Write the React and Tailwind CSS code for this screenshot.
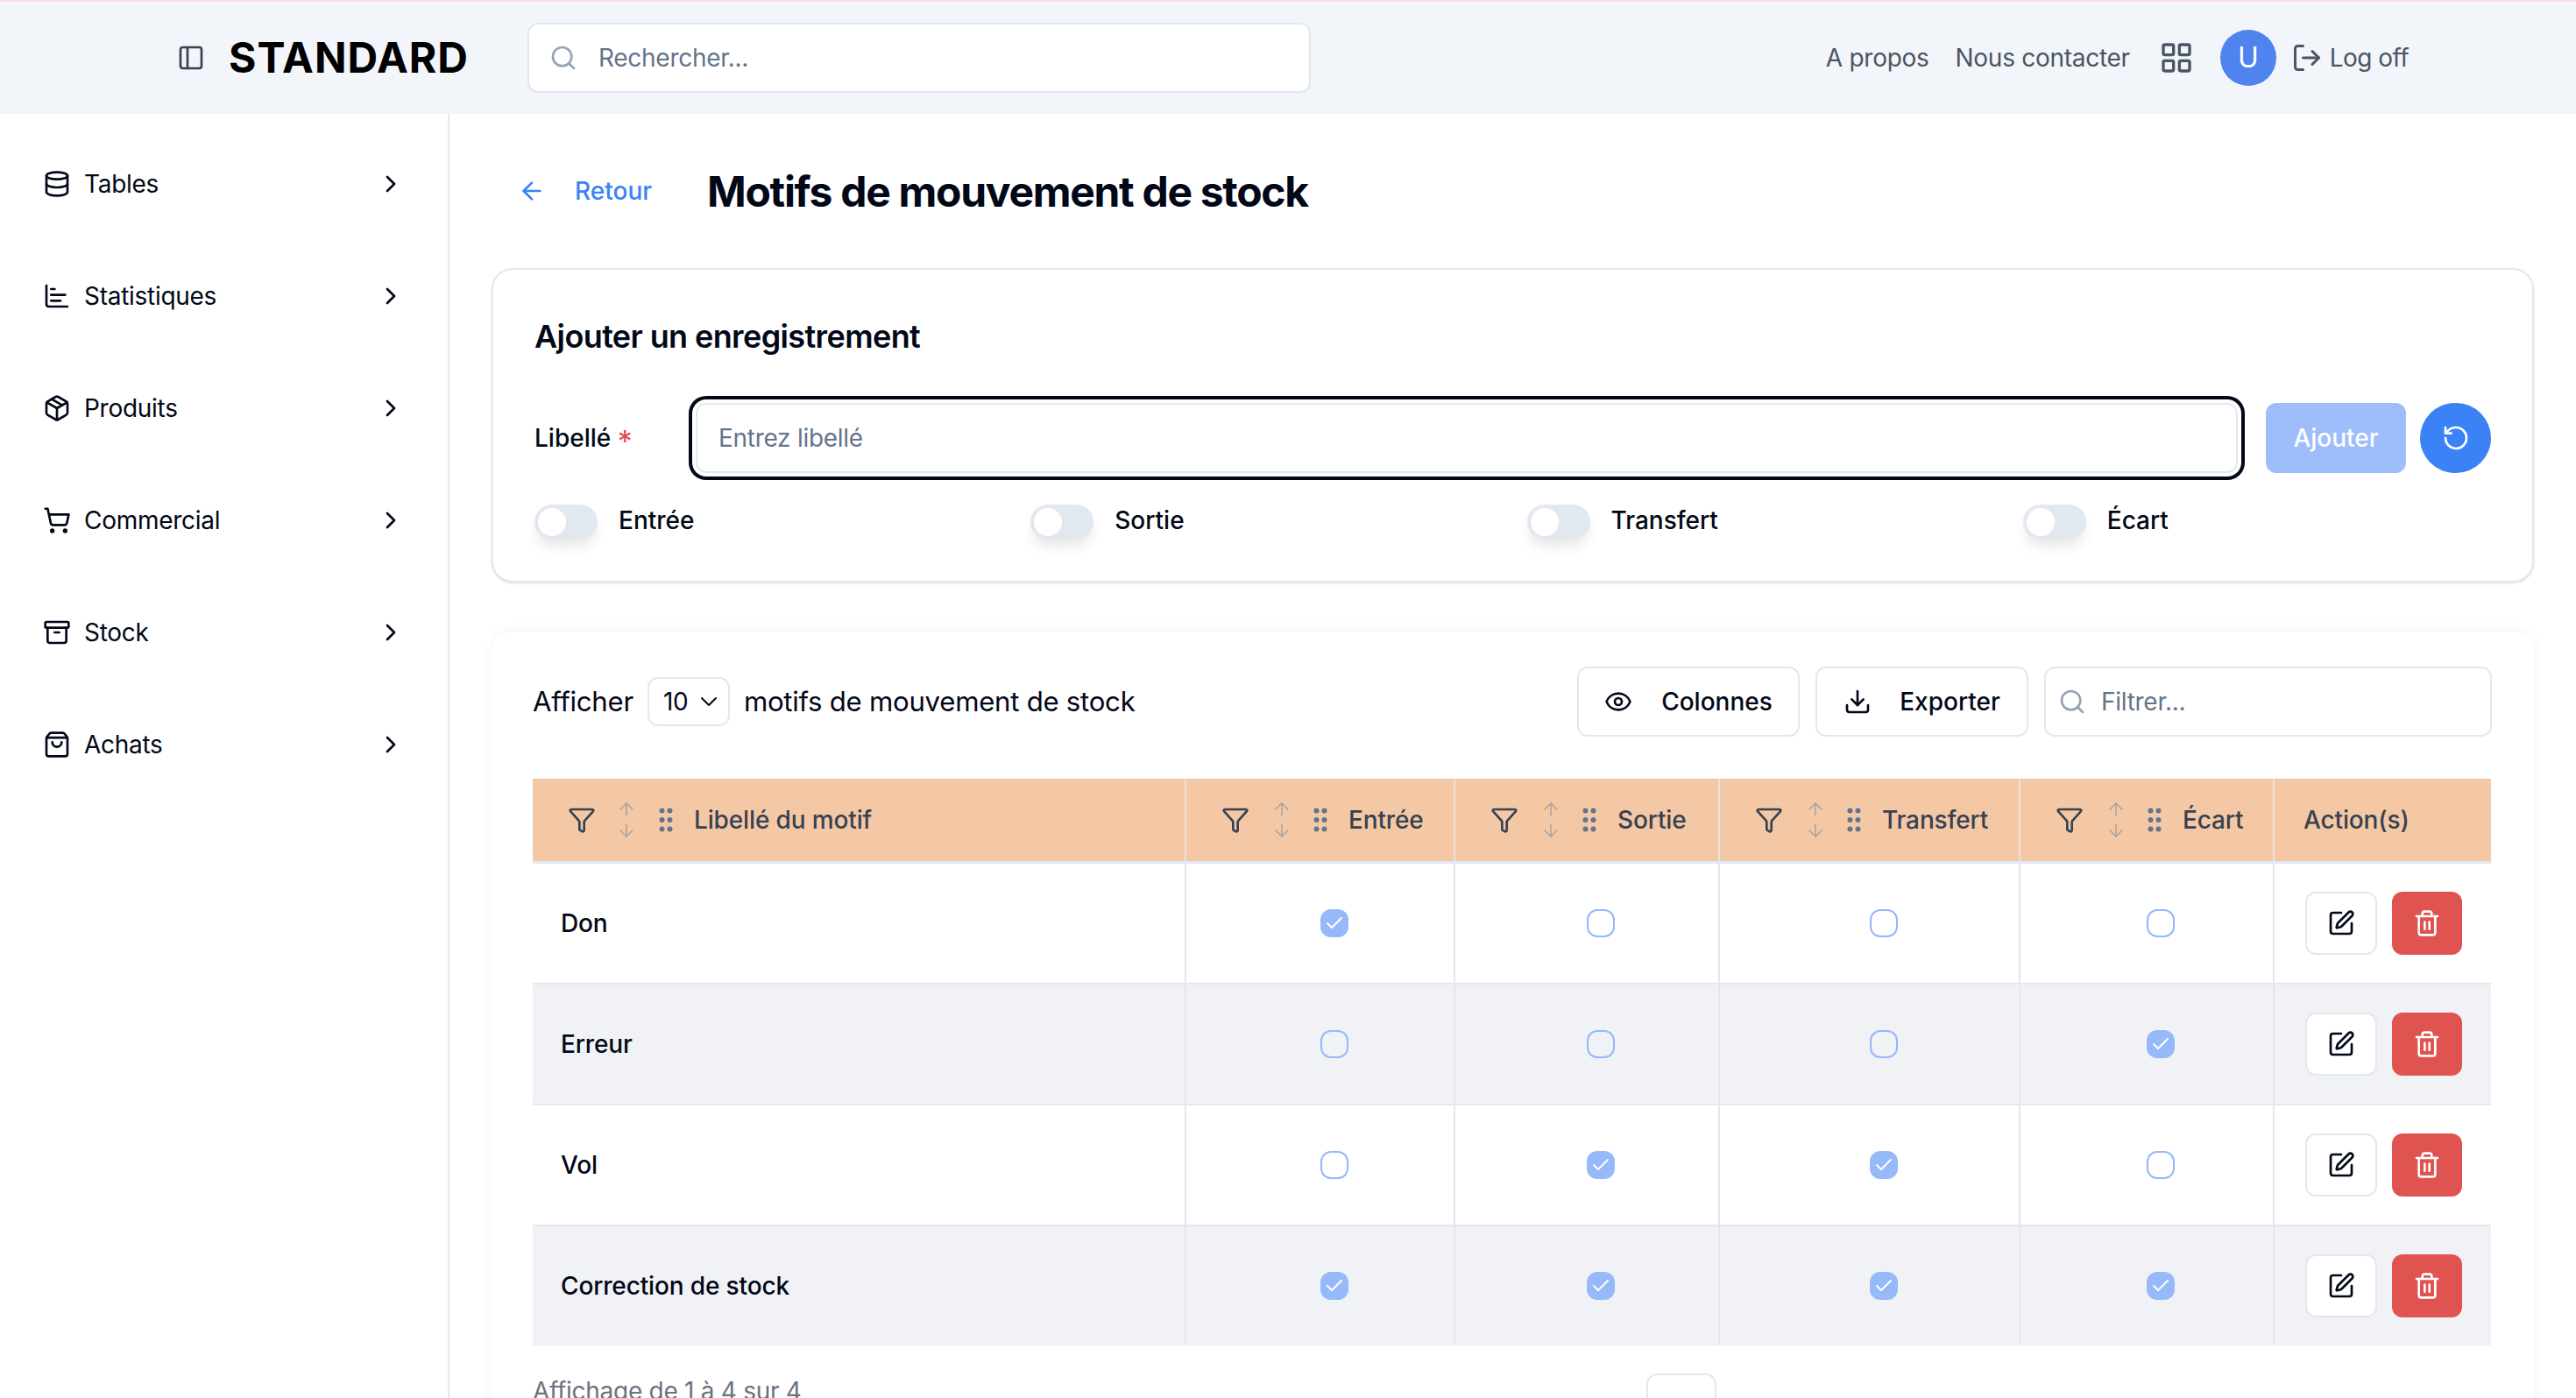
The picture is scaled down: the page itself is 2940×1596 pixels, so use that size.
import {
  PanelLeft, Search, LayoutGrid, LogOut, Database, ChartBar, Package, ShoppingCart, Archive, ShoppingBag,
  ChevronRight, ChevronDown, ArrowLeft, RotateCcw, Eye, Download, Funnel, ArrowUp, ArrowDown, GripVertical,
  SquarePen, Trash2, Check,
} from "lucide-react";

const menu = [
  { label: "Tables", icon: Database },
  { label: "Statistiques", icon: ChartBar },
  { label: "Produits", icon: Package },
  { label: "Commercial", icon: ShoppingCart },
  { label: "Stock", icon: Archive },
  { label: "Achats", icon: ShoppingBag },
];

const rows = [
  { label: "Don", values: [true, false, false, false] },
  { label: "Erreur", values: [false, false, false, true] },
  { label: "Vol", values: [false, true, true, false] },
  { label: "Correction de stock", values: [true, true, true, true] },
];

const columns = ["Entrée", "Sortie", "Transfert", "Écart"];

function HeaderCell({ label, first }) {
  return (
    <th className="border-r-2 border-b-[3px] border-r-[#e8e3df] border-b-[#e2e8f0] pl-[40px] text-left font-medium tracking-[-0.005em]">
      <div className="flex items-center">
        <Funnel size={32} className="text-[#374151]" />
        <div className={`flex flex-col items-center text-[#a8a29e] ${first ? "ml-[23px]" : "ml-[25px]"}`}>
          <ArrowUp size={24} strokeWidth={1.5} />
          <ArrowDown size={24} strokeWidth={1.5} />
        </div>
        <GripVertical size={36} className={`text-[#64748b] ${first ? "ml-[15px]" : "ml-[14px]"}`} />
        <span className="ml-[14px] text-[#374151]">{label}</span>
      </div>
    </th>
  );
}

function RowCheck({ checked }) {
  return (
    <div className="flex justify-center pl-[32px]">
      {checked ? (
        <div className="flex h-[32px] w-[32px] items-center justify-center rounded-[12px] bg-[#96b9fa]">
          <Check size={24} className="text-white" />
        </div>
      ) : (
        <div className="h-[32px] w-[32px] rounded-[12px] border-2 border-[#93b8fb]" />
      )}
    </div>
  );
}

export default function App() {
  return (
    <div className="flex h-screen flex-col overflow-hidden bg-white font-[Inter,sans-serif] text-[28px] leading-[40px] tracking-[-0.01em] text-[#020817]">
      {/* top bar */}
      <header className="flex h-[130px] shrink-0 items-center border-t-2 border-[#f5e1e5] bg-[#f2f5fa] pl-[202px] pr-[191px]">
        <PanelLeft size={32} className="text-[#374151]" />
        <span className="ml-[27px] text-[48px] font-bold leading-none tracking-[0.02em] text-black">STANDARD</span>
        <div className="ml-[67px] flex h-[80px] w-[894px] items-center rounded-[12px] border-2 border-[#e2e8f0] bg-white pl-[23px]">
          <Search size={32} className="shrink-0 text-[#94a3b8]" />
          <input
            placeholder="Rechercher..."
            className="ml-[24px] w-full bg-transparent tracking-[-0.01em] outline-none placeholder:text-[#64748b]"
          />
        </div>
        <div className="ml-auto flex items-center text-[#4b5563]">
          <span>A propos</span>
          <span className="ml-[30px]">Nous contacter</span>
          <LayoutGrid size={40} className="ml-[33px]" />
          <div className="ml-[30px] flex h-[64px] w-[64px] items-center justify-center rounded-full bg-[#4f83ee] text-[32px] text-white">
            U
          </div>
          <LogOut size={36} className="ml-[17px]" />
          <span className="ml-[8px] tracking-[-0.02em]">Log off</span>
        </div>
      </header>

      <div className="flex min-h-0 flex-1">
        {/* sidebar */}
        <aside className="w-[513px] shrink-0 border-r-2 border-[#e2e8f0] pt-[16px]">
          {menu.map((item) => {
            const Icon = item.icon;
            return (
              <div key={item.label} className="flex h-[128px] items-center justify-between pl-[49px] pr-[49px]">
                <div className="flex items-center gap-[15px]">
                  <Icon size={32} />
                  <span>{item.label}</span>
                </div>
                <ChevronRight size={32} />
              </div>
            );
          })}
        </aside>

        <main className="min-w-0 flex-1 px-[48px] pt-[40px]">
          {/* title */}
          <div className="flex h-[96px] items-center pl-[30px]">
            <ArrowLeft size={32} className="text-[#3b82f6]" />
            <span className="ml-[33px] font-medium tracking-normal text-[#3b82f6]">Retour</span>
            <h1 className="ml-[63px] mt-[2px] text-[48px] font-bold leading-none tracking-[-0.027em] text-[#020817]">
              Motifs de mouvement de stock
            </h1>
          </div>

          {/* add form */}
          <section className="mt-[40px] rounded-[24px] border-2 border-[#e2e8f0] bg-white px-[47px] pb-[47px] pt-[48px] shadow-sm">
            <h2 className="text-[36px] font-semibold leading-[56px] tracking-[-0.017em]">Ajouter un enregistrement</h2>
            <div className="mt-[48px] flex h-[80px] items-center">
              <label className="w-[184px] shrink-0 font-medium tracking-normal">
                Libellé <span className="inline-block translate-y-[6px] text-[34px] font-normal leading-[32px] text-[#e5484d]">*</span>
              </label>
              <input
                placeholder="Entrez libellé"
                className="h-[80px] min-w-0 flex-1 rounded-[12px] border-2 border-[#e2e8f0] bg-white px-[24px] tracking-[-0.01em] outline-none ring-4 ring-[#020817] ring-offset-4 ring-offset-white placeholder:text-[#64748b]"
              />
              <button className="ml-[32px] flex h-[80px] w-[160px] shrink-0 items-center justify-center rounded-[12px] bg-[#9dbdfb] font-medium tracking-normal text-white">
                Ajouter
              </button>
              <button className="ml-[16px] flex h-[80px] w-[81px] shrink-0 items-center justify-center rounded-full bg-[#3b82f6] text-white">
                <RotateCcw size={32} />
              </button>
            </div>
            <div className="mt-[36px] grid grid-cols-4 gap-x-[32px]">
              {columns.map((label) => (
                <div key={label} className="flex h-[40px] items-center">
                  <div className="flex h-[40px] w-[72px] items-center rounded-full bg-[#e2e8f0] pl-[4px] shadow-[0_10px_15px_-3px_rgba(0,0,0,0.1)]">
                    <div className="h-[32px] w-[32px] rounded-full bg-white" />
                  </div>
                  <span className="mb-[4px] ml-[24px] font-medium tracking-normal">{label}</span>
                </div>
              ))}
            </div>
          </section>

          {/* table card */}
          <section className="mt-[56px] rounded-[24px] bg-white pl-[47px] pr-[48px] pt-[40px] shadow-[0_0_16px_rgba(0,0,0,0.05)]">
            <div className="flex h-[80px] items-center">
              <span className="text-[31.2px]">Afficher</span>
              <div className="ml-[16px] flex h-[56px] w-[94px] items-center justify-between rounded-[12px] border-2 border-[#e2e8f0] pl-[16px] pr-[6px]">
                <span>10</span>
                <ChevronDown size={32} strokeWidth={1.5} />
              </div>
              <span className="ml-[16px] text-[31.2px]">motifs de mouvement de stock</span>
              <div className="ml-auto flex items-center">
                <button className="flex h-[80px] w-[254px] items-center justify-center gap-[33px] rounded-[12px] border-2 border-[#e2e8f0] bg-white font-medium tracking-normal">
                  <Eye size={32} />
                  Colonnes
                </button>
                <button className="ml-[18px] flex h-[80px] w-[243px] items-center justify-center gap-[32px] rounded-[12px] border-2 border-[#e2e8f0] bg-white font-medium tracking-normal">
                  <Download size={32} />
                  Exporter
                </button>
                <div className="ml-[18px] flex h-[80px] w-[511px] items-center rounded-[12px] border-2 border-[#e2e8f0] bg-white pl-[14px]">
                  <Search size={32} className="shrink-0 text-[#94a3b8]" />
                  <input
                    placeholder="Filtrer..."
                    className="ml-[17px] w-full bg-transparent tracking-[-0.01em] outline-none placeholder:text-[#64748b]"
                  />
                </div>
              </div>
            </div>

            <table className="mt-[48px] w-[2235px] table-fixed border-separate border-spacing-0">
              <colgroup>
                <col className="w-[746px]" />
                <col className="w-[307px]" />
                <col className="w-[302px]" />
                <col className="w-[343px]" />
                <col className="w-[290px]" />
                <col className="w-[247px]" />
              </colgroup>
              <thead>
                <tr className="h-[97px] bg-[#f5c8a5]">
                  <HeaderCell label="Libellé du motif" first />
                  {columns.map((c) => (
                    <HeaderCell key={c} label={c} />
                  ))}
                  <th className="border-b-[3px] border-b-[#e2e8f0] pl-[33px] text-left font-medium tracking-[-0.005em] text-[#374151]">Action(s)</th>
                </tr>
              </thead>
              <tbody>
                {rows.map((row, i) => {
                  const last = i === rows.length - 1;
                  return (
                    <tr key={row.label} className={`${last ? "h-[136px]" : "h-[138px]"} ${i % 2 === 1 ? "bg-[#f1f2f5]" : "bg-white"}`}>
                      <td className={`border-r-2 border-[#e5e7eb] pl-[32px] font-medium tracking-[-0.005em] ${last ? "" : "border-b-2 border-b-[#e2e8f0]"}`}>
                        {row.label}
                      </td>
                      {row.values.map((v, j) => (
                        <td key={j} className={`border-r-2 border-[#e5e7eb] ${last ? "" : "border-b-2 border-b-[#e2e8f0]"}`}>
                          <RowCheck checked={v} />
                        </td>
                      ))}
                      <td className={`pl-[35px] ${last ? "" : "border-b-2 border-b-[#e2e8f0]"}`}>
                        <div className="flex items-center gap-[17px]">
                          <button className="flex h-[72px] w-[82px] items-center justify-center rounded-[12px] border-2 border-[#e2e8f0] bg-white">
                            <SquarePen size={32} />
                          </button>
                          <button className="flex h-[72px] w-[80px] items-center justify-center rounded-[12px] bg-[#df5350] text-white">
                            <Trash2 size={32} />
                          </button>
                        </div>
                      </td>
                    </tr>
                  );
                })}
              </tbody>
            </table>

            <div className="mt-[32px] flex items-start pb-[48px]">
              <span className="text-[#6b7280]">Affichage de 1 à 4 sur 4</span>
              <div className="ml-[964px] h-[80px] w-[80px] rounded-[12px] border-2 border-[#e2e8f0] bg-white" />
            </div>
          </section>
        </main>
      </div>
    </div>
  );
}
